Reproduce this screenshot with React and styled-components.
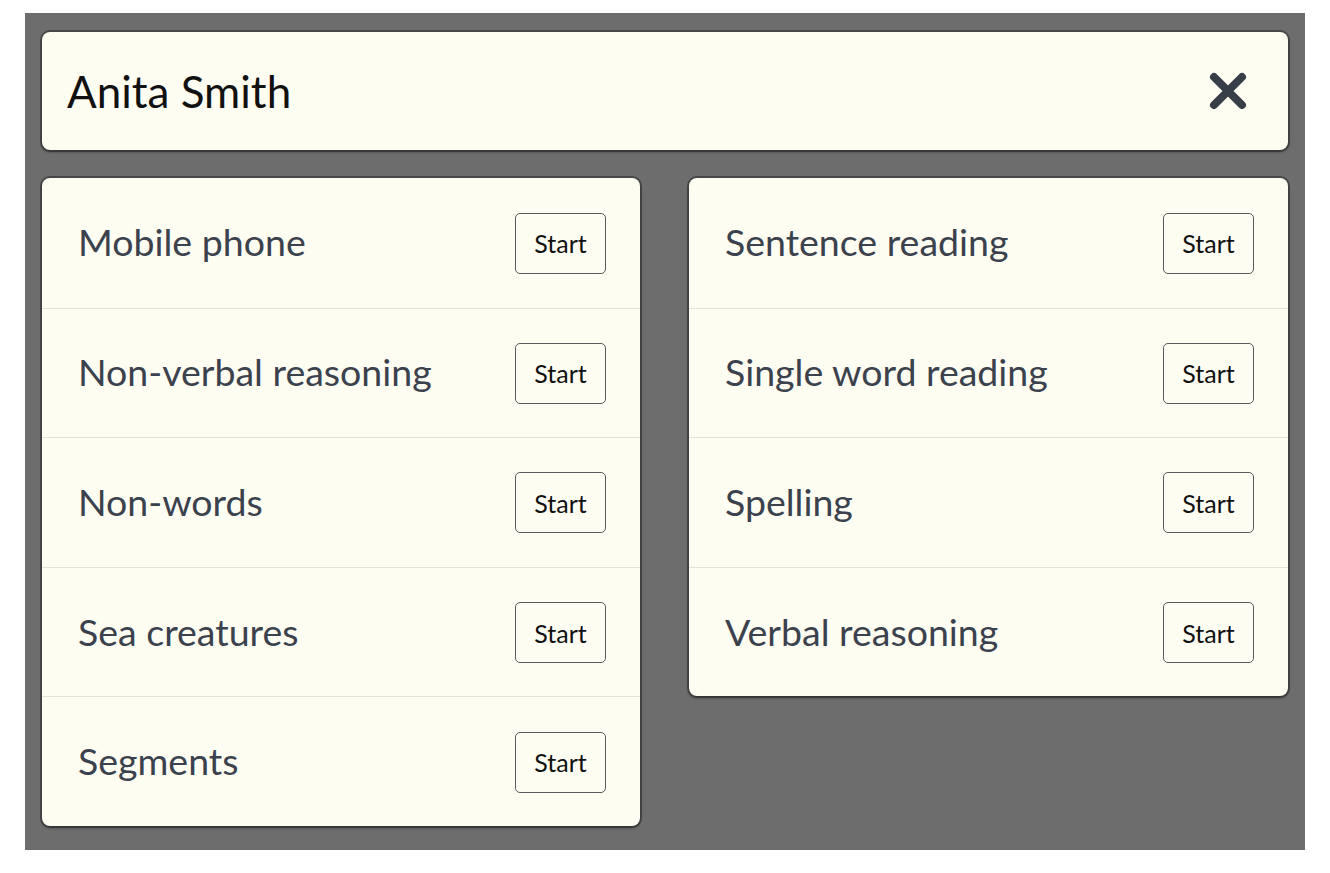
import React from "react";
import styled, { createGlobalStyle } from "styled-components";

const GlobalStyle = createGlobalStyle`
  body {
    margin: 0;
    background: #fff;
    font-family: Lato, "Noto Sans", sans-serif;
  }
`;

const Screen = styled.div`
  margin: 13px 25px 0;
  width: 1280px;
  height: 837px;
  box-sizing: border-box;
  background: #6d6d6d;
  padding: 19px 17px;
  display: flex;
  flex-direction: column;
  gap: 28px;
`;

const Card = styled.div`
  background: #fdfdf2;
  border-radius: 8px;
  box-shadow: 0 0 0 2px rgba(40, 40, 40, 0.55), 0 2px 3px rgba(0, 0, 0, 0.4);
`;

const Header = styled(Card)`
  height: 118px;
  display: flex;
  align-items: center;
  justify-content: space-between;
  padding: 0 40px 0 25px;
`;

const Name = styled.h1`
  margin: 0;
  font-size: 44px;
  font-weight: 400;
  color: #111;
`;

const Close = styled.button`
  border: none;
  background: none;
  padding: 0;
  width: 40px;
  height: 40px;
  cursor: pointer;
  display: flex;
`;

const Columns = styled.div`
  display: grid;
  grid-template-columns: 598px 599px;
  gap: 49px;
  align-items: start;
`;

const List = styled(Card)`
  display: flex;
  flex-direction: column;
`;

const Row = styled.div`
  box-sizing: border-box;
  height: 129.6px;
  display: flex;
  align-items: center;
  justify-content: space-between;
  padding: 1px 34px 0 36px;
  border-top: ${(p) => (p.first ? "none" : "1px solid #e3e3d8")};
`;

const Label = styled.span`
  font-size: 37.5px;
  color: #3b424d;
  margin-top: -3px;
`;

const StartButton = styled.button`
  width: 91px;
  height: 61px;
  border: 1px solid #5a5a5a;
  border-radius: 5px;
  background: transparent;
  font-family: inherit;
  font-size: 25px;
  color: #111;
  cursor: pointer;
`;

const left = ["Mobile phone", "Non-verbal reasoning", "Non-words", "Sea creatures", "Segments"];
const right = ["Sentence reading", "Single word reading", "Spelling", "Verbal reasoning"];

function TestList({ items }) {
  return (
    <List>
      {items.map((t, i) => (
        <Row key={t} first={i === 0}>
          <Label>{t}</Label>
          <StartButton>Start</StartButton>
        </Row>
      ))}
    </List>
  );
}

export default function App() {
  return (
    <>
      <GlobalStyle />
      <Screen>
        <Header>
          <Name>Anita Smith</Name>
          <Close aria-label="Close">
            <svg width="40" height="40" viewBox="0 0 40 40">
              <path d="M6 6 L34 34 M34 6 L6 34" stroke="#383e48" strokeWidth="8" strokeLinecap="round" />
            </svg>
          </Close>
        </Header>
        <Columns>
          <TestList items={left} />
          <TestList items={right} />
        </Columns>
      </Screen>
    </>
  );
}
